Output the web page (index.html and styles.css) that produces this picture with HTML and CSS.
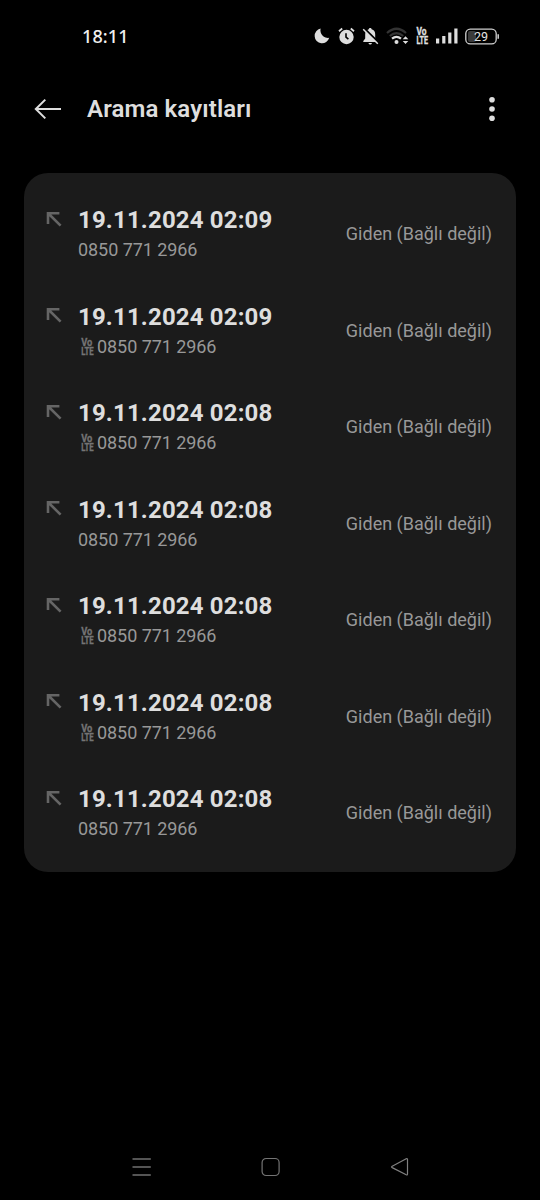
FILE: index.html
```html
<!DOCTYPE html>
<html lang="tr">
<head>
<meta charset="utf-8">
<title>Arama kayıtları</title>
<link rel="stylesheet" href="styles.css">
</head>
<body>
<svg class="defs" aria-hidden="true">
  <symbol id="outgoing" viewBox="0 0 16 16"><path d="M2 13V2.2H13.4M2.6 2.8L14.6 14.6" fill="none" stroke="currentColor" stroke-width="2.6"/></symbol>
</svg>
<div class="screen">
  <header class="status">
    <span class="clock">18:11</span>
    <div class="indicators">
      <svg class="moon" width="16" height="16" viewBox="0 0 16 16"><path d="M6.6 .6A7.6 7.6 0 0 0 15.2 9.8A7.4 7.4 0 1 1 6.6 .6Z" fill="#dedede"/></svg>
      <svg class="alarm" width="17" height="18" viewBox="0 0 17 18"><circle cx="8.5" cy="10" r="7.2" fill="#dedede"/><path d="M1 4.2L4.2 1.5M16 4.2L12.8 1.5" stroke="#dedede" stroke-width="1.8"/><path d="M8 6.3V10.2L10.4 12.2" fill="none" stroke="#000" stroke-width="1.6"/></svg>
      <svg class="bell" width="17" height="18" viewBox="0 0 17 18"><path d="M8.2 1C9 1 9.5 1.5 9.6 2.3C12 3 13.2 4.8 13.2 7.3V11.5L15 14V15H1.3V14L3.2 11.5V7.3C3.2 4.8 4.5 3 6.8 2.3C6.9 1.5 7.4 1 8.2 1ZM6.4 16H10Q9.5 17.5 8.2 17.5T6.4 16Z" fill="#dedede"/><path d="M2.4 1.5L17 16" stroke="#000" stroke-width="2"/><path d="M1.2 2.2L15.8 16.8" stroke="#dedede" stroke-width="1.5"/></svg>
      <svg class="wifi" width="23" height="18" viewBox="0 0 23 18"><g fill="none" stroke-width="2.2"><path d="M1 6Q10.5-2.5 20 6" stroke="#333"/><path d="M3.8 9Q10.5 3.2 17.2 9" stroke="#343434"/><path d="M6 11.7Q10.5 7.9 15 11.7" stroke="#dedede"/></g><circle cx="10.5" cy="15" r="2" fill="#dedede"/><path d="M19.5 9.2L22.3 12.2H16.7ZM19.5 17L22.3 14H16.7Z" fill="#dedede"/></svg>
      <svg class="volte-status" viewBox="0 0 13 18"><text x="0.5" y="8.2" textLength="10" lengthAdjust="spacingAndGlyphs">Vo</text><text x="0.5" y="17" textLength="11.5" lengthAdjust="spacingAndGlyphs">LTE</text></svg>
      <svg class="signal" width="22" height="16" viewBox="0 0 22 16"><path d="M0 10.5H3.2V15.5H0ZM6.2 8H9.4V15.5H6.2ZM12.2 4.5H15.4V15.5H12.2ZM18.3 .5H21.5V15.5H18.3Z" fill="#dedede"/></svg>
      <svg class="battery" width="35" height="17" viewBox="0 0 35 17"><rect x="3" y="3" width="8" height="11" rx="2" fill="#3b3b3b"/><rect x=".8" y="1.1" width="30.4" height="14.8" rx="4.5" fill="none" stroke="#d0d0d0" stroke-width="1.3"/><path d="M33.2 6.2V10.8" stroke="#d0d0d0" stroke-width="1.5"/><text x="16" y="12.9" text-anchor="middle" font-family="Roboto, sans-serif" font-size="12.5" font-weight="400" fill="#e2e2e2">29</text></svg>
    </div>
  </header>
  <div class="toolbar">
    <svg width="28" height="22" viewBox="0 0 28 22"><path d="M11.3 1.6L1.8 11L11.3 20.4M2 11H27" fill="none" stroke="#dedede" stroke-width="2"/></svg>
    <h1>Arama kayıtları</h1>
    <svg class="more" width="8" height="26" viewBox="0 0 8 26" fill="#dedede"><circle cx="4" cy="3.8" r="2.8"/><circle cx="4" cy="13" r="2.8"/><circle cx="4" cy="22.2" r="2.8"/></svg>
  </div>
  <main class="card">
    <div class="call"><svg class="arrow"><use href="#outgoing"/></svg><div class="info"><div class="date">19.11.2024 02:09</div><div class="number">0850 771 2966</div></div><div class="kind">Giden (Bağlı değil)</div></div>
    <div class="call"><svg class="arrow"><use href="#outgoing"/></svg><div class="info"><div class="date">19.11.2024 02:09</div><div class="number"><svg class="volte" viewBox="0 0 13 18"><text x="0.3" y="8" textLength="11" lengthAdjust="spacingAndGlyphs">Vo</text><text x="0.3" y="16.8" textLength="12.4" lengthAdjust="spacingAndGlyphs">LTE</text></svg>0850 771 2966</div></div><div class="kind">Giden (Bağlı değil)</div></div>
    <div class="call"><svg class="arrow"><use href="#outgoing"/></svg><div class="info"><div class="date">19.11.2024 02:08</div><div class="number"><svg class="volte" viewBox="0 0 13 18"><text x="0.3" y="8" textLength="11" lengthAdjust="spacingAndGlyphs">Vo</text><text x="0.3" y="16.8" textLength="12.4" lengthAdjust="spacingAndGlyphs">LTE</text></svg>0850 771 2966</div></div><div class="kind">Giden (Bağlı değil)</div></div>
    <div class="call"><svg class="arrow"><use href="#outgoing"/></svg><div class="info"><div class="date">19.11.2024 02:08</div><div class="number">0850 771 2966</div></div><div class="kind">Giden (Bağlı değil)</div></div>
    <div class="call"><svg class="arrow"><use href="#outgoing"/></svg><div class="info"><div class="date">19.11.2024 02:08</div><div class="number"><svg class="volte" viewBox="0 0 13 18"><text x="0.3" y="8" textLength="11" lengthAdjust="spacingAndGlyphs">Vo</text><text x="0.3" y="16.8" textLength="12.4" lengthAdjust="spacingAndGlyphs">LTE</text></svg>0850 771 2966</div></div><div class="kind">Giden (Bağlı değil)</div></div>
    <div class="call"><svg class="arrow"><use href="#outgoing"/></svg><div class="info"><div class="date">19.11.2024 02:08</div><div class="number"><svg class="volte" viewBox="0 0 13 18"><text x="0.3" y="8" textLength="11" lengthAdjust="spacingAndGlyphs">Vo</text><text x="0.3" y="16.8" textLength="12.4" lengthAdjust="spacingAndGlyphs">LTE</text></svg>0850 771 2966</div></div><div class="kind">Giden (Bağlı değil)</div></div>
    <div class="call"><svg class="arrow"><use href="#outgoing"/></svg><div class="info"><div class="date">19.11.2024 02:08</div><div class="number">0850 771 2966</div></div><div class="kind">Giden (Bağlı değil)</div></div>
  </main>
  <nav class="navbar">
    <svg width="20" height="20" viewBox="0 0 20 20"><path d="M.5 2H18.8M.5 10H18.8M.5 18H18.8" stroke="#707070" stroke-width="1.4"/></svg>
    <svg width="20" height="20" viewBox="0 0 20 20"><rect x="1.1" y="1.5" width="17" height="17" rx="4" fill="none" stroke="#747474" stroke-width="1.2"/></svg>
    <svg width="20" height="20" viewBox="0 0 20 20"><path d="M2.2 9.2L16.2 1.8Q17.5 1.2 17.5 2.6V17Q17.5 18.4 16.2 17.8L2.2 10.6Q1 9.9 2.2 9.2Z" fill="none" stroke="#808080" stroke-width="1.2"/></svg>
  </nav>
</div>
</body>
</html>
```

FILE: styles.css
```css
body {
  margin: 0;
  background: #000;
  color: #dedede;
  font-family: Roboto, "Noto Sans", sans-serif;
}
svg { display: block; flex: none; }
.defs { width: 0; height: 0; position: absolute; }
.screen {
  width: 540px;
  height: 1200px;
  display: flex;
  flex-direction: column;
}
.status {
  height: 72px;
  padding: 0 40px 0 82px;
  box-sizing: border-box;
  display: flex;
  align-items: center;
  justify-content: space-between;
}
.clock {
  font-family: "Noto Sans", sans-serif;
  font-size: 18px;
  font-weight: 500;
  letter-spacing: .1px;
  color: #f0f0f0;
}
.indicators { display: flex; align-items: center; }
.alarm { margin-left: 8px; }
.bell { margin-left: 7px; }
.wifi { margin-left: 7px; }
.volte-status {
  width: 13px;
  height: 18px;
  margin-left: 7px;
  overflow: visible;
  fill: #e0e0e0;
  stroke: #e0e0e0;
}
.signal { margin-left: 7px; }
.battery { margin-left: 7px; }
.volte-status text,
.volte text {
  font-family: Roboto, sans-serif;
  font-size: 10px;
  font-weight: 700;
  stroke-width: .3px;
}
.toolbar {
  height: 74px;
  padding: 0 44px 0 34px;
  display: flex;
  align-items: center;
}
h1 {
  margin: 0 0 0 25px;
  font-size: 24px;
  line-height: 30px;
  font-weight: 600;
  letter-spacing: .12px;
}
.more { margin-left: auto; }
.card {
  margin: 26.5px 24px 0;
  padding: 13.3px 24px 10.7px 22px;
  background: #1b1b1b;
  border-radius: 24px;
}
.call {
  height: 96.5px;
  display: flex;
  align-items: center;
}
.arrow {
  width: 16px;
  height: 16px;
  color: #656565;
  align-self: flex-start;
  margin-top: 25px;
}
.info { margin-left: 16px; }
.date {
  font-size: 24px;
  line-height: 32px;
  font-weight: 700;
  letter-spacing: .16px;
}
.number {
  height: 28px;
  display: flex;
  align-items: center;
  font-size: 18px;
  line-height: 28px;
  letter-spacing: -.06px;
  color: #989898;
}
.volte {
  width: 13px;
  height: 18px;
  margin: 0 3px;
  overflow: visible;
  fill: #747474;
  stroke: #747474;
}
.kind {
  margin-left: auto;
  font-size: 18px;
  line-height: 24px;
  color: #989898;
}
.navbar {
  margin-top: auto;
  height: 66px;
  padding: 0 130px 0 132px;
  display: flex;
  align-items: center;
  justify-content: space-between;
}
```
